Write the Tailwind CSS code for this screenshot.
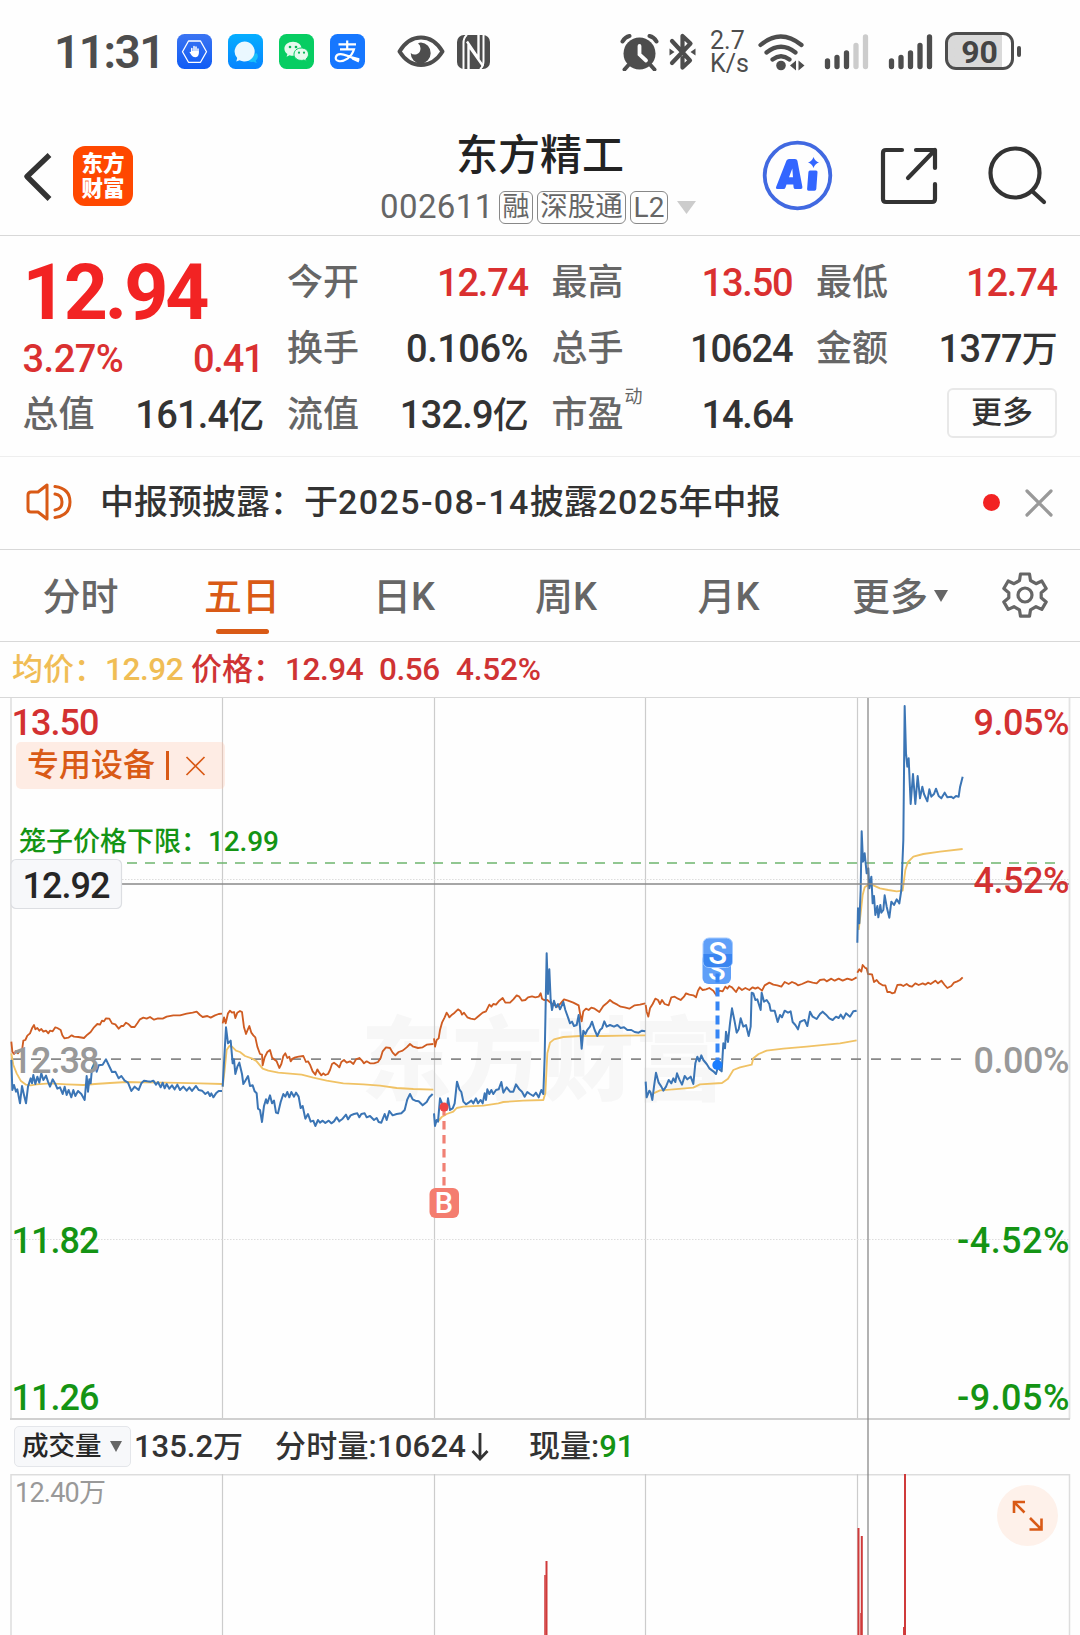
<!DOCTYPE html>
<html lang="zh-CN">
<head>
<meta charset="utf-8">
<meta name="viewport" content="width=device-width, initial-scale=1">
<title>东方精工 002611</title>
<script src="https://cdn.jsdelivr.net/npm/@tailwindcss/browser@4"></script>
</head>
<body class="w-[1080px] h-[1635px] overflow-hidden bg-[#fefefe] text-[#333] font-medium [font-family:Roboto,'Noto_Sans_CJK_SC',sans-serif]">

<!-- Status bar -->
<div class="h-[105px] flex items-start pt-[32px] pl-[54px] text-[#4d4d4d]">
  <div class="w-[123px] h-[38px] leading-[40px] text-[46px] font-semibold tracking-[-1.500px] whitespace-nowrap">11:31</div>
  <div class="flex gap-4 pt-[2px]">
    <svg class="w-[35px] h-[35px]" viewBox="0 0 35 35"><defs><linearGradient id="ga" x2="0" y2="1"><stop stop-color="#3b74f2"/><stop offset="1" stop-color="#0f5cf5"/></linearGradient></defs><rect width="35" height="35" rx="7.5" fill="url(#ga)"/><path d="M11.5 7h12l6 10.7-6 10.6h-12l-6-10.6z" fill="none" stroke="#fff" stroke-width="1.3" stroke-linejoin="round"/><path d="M14.8 19v-4.500M17 18v-5.500M19 18v-5M21 19v-4" stroke="#fff" stroke-width="1.500" stroke-linecap="round"/><path d="M14 17h7.700v3.200q-.6 3-3.500 3-2.400 0-3.700-1.900l-2.100-3.200q1-.9 2 .5z" fill="#fff"/></svg>
    <svg class="w-[35px] h-[35px]" viewBox="0 0 35 35"><defs><linearGradient id="gb" x2="0" y2="1"><stop stop-color="#05aeff"/><stop offset="1" stop-color="#0784ff"/></linearGradient></defs><rect width="35" height="35" rx="7.5" fill="url(#gb)"/><path d="M28.500 19a5 5 0 0 1-.8 7.500l1 2.500-3.500-1.200a5 5 0 0 1-6-3z" fill="#18c0fb"/><path d="M16.500 7.500a10.300 10 0 1 1-5 18.800L8.300 27.500l.9-3.500A10.300 10 0 0 1 16.500 7.500z" fill="#eaf8ff"/></svg>
    <svg class="w-[35px] h-[35px]" viewBox="0 0 35 35"><rect width="35" height="35" rx="7.5" fill="#07cd62"/><path d="M14 7.700c-5 0-8.600 3-8.600 7 0 2.200 1.200 4.100 3 5.400l-.8 2.600 3-1.500c1.200.4 2.200.5 3.400.5 5 0 8.600-3 8.600-7s-3.600-7-8.600-7z" fill="#e6faee"/><path d="M22.300 14c-4.200 0-7.300 2.700-7.300 6.200s3.100 6.200 7.300 6.200c1 0 1.800-.1 2.700-.4l2.500 1.300-.6-2.200c1.600-1.200 2.600-2.900 2.600-4.900 0-3.500-3-6.200-7.200-6.200z" fill="#e6faee" stroke="#07cd62" stroke-width="1"/><g fill="#07b858"><circle cx="11" cy="13" r="1.300"/><circle cx="17" cy="13" r="1.300"/><circle cx="20" cy="18.700" r="1.100"/><circle cx="25" cy="18.700" r="1.100"/></g></svg>
    <svg class="w-[35px] h-[35px]" viewBox="0 0 35 35"><rect width="35" height="35" rx="7.500" fill="#1677ff"/><g fill="none" stroke="#fff" stroke-width="2.200"><path d="M8.500 10.300h17.500M17.200 6.500v8.300M10 15.300h14q-1.500 5.500-6.500 9.300-4.500 3-8.300 2.600-4-.7-3.400-4 .8-3.200 5-3 4.500.2 18.400 6.600"/></g><path d="M21 22l8.500 2.300-1 4.200-6.500-3z" fill="#fff"/></svg>
  </div>
  <svg class="ml-[32px] mt-[2px] w-[48px] h-[35px]" viewBox="0 0 48 35"><path d="M2.500 17.500Q11 3.500 24 3.500t21.500 14Q37 31 24 31T2.500 17.500z" fill="none" stroke="#4d4d4d" stroke-width="4" stroke-linejoin="round"/><path d="M24 8.500a10 10.500 0 1 1-10.300 10.500q2.500 2.300 6 1.200 4-1.600 3.800-6-.2-3.200-2.500-4.600Q22.500 8.500 24 8.500z" fill="#4d4d4d"/></svg>
  <svg class="ml-[12px] mt-[3px] w-[33px] h-[34px]" viewBox="0 0 33 34"><rect width="33" height="34" rx="7" fill="#4d4d4d"/><path d="M6.500 34V8Q6.500 2.500 10 0M26.500 0v26q0 5.500-3.500 8" fill="none" stroke="#fefefe" stroke-width="2"/><path d="M11.500 34V10.500L26 31M7 0l0 0M21.500 0v23.500L10 6.500" fill="none" stroke="#fefefe" stroke-width="2.400"/></svg>

  <div class="ml-[130px] flex items-start">
    <svg class="w-[39px] h-[37px] mt-[2px]" viewBox="0 0 39 37"><circle cx="19.500" cy="19.500" r="16" fill="#4d4d4d"/><path d="M8.500 31l-4 4.500M30.500 31l4 4.500M2.500 7.500Q5 3 9.500 2M36.500 7.500Q34 3 29.500 2" stroke="#4d4d4d" stroke-width="4" stroke-linecap="round" fill="none"/><path d="M19.500 12v8.500l6.500 6" fill="none" stroke="#fefefe" stroke-width="3.800" stroke-linecap="round"/></svg>
    <svg class="ml-[10px] w-[27px] h-[38px] mt-px" viewBox="0 0 27 38"><path d="M3 8l18 19.500-7.500 7V25M3 30L21.500 10.500 13.500 3v11" fill="none" stroke="#4d4d4d" stroke-width="4.200" stroke-linejoin="round" stroke-linecap="round"/><path d="M.5 15.500l5 3.500-5 3.500zM26.500 15.500l-5 3.500 5 3.500z" fill="#4d4d4d"/></svg>
    <div class="ml-[14px] w-[48px] text-[25px] leading-[22.500px] font-normal whitespace-nowrap -mt-[2px]"><div>2.7</div><div>K/s</div></div>
    <svg class="w-[47px] h-[37px] mt-[2px]" viewBox="0 0 47 37"><g fill="none" stroke="#4d4d4d" stroke-width="4.200" stroke-linecap="round"><path d="M2.500 11Q22.500-6 43.500 11M8.500 18.500q14.500-11.500 29 0M14.500 25.500q8.500-6.500 17 0"/></g><circle cx="23" cy="31.500" r="4.800" fill="#4d4d4d"/><path d="M38 26.500v10l-6-5zM40.500 26.500v10l6-5z" fill="#4d4d4d"/></svg>
    <svg class="ml-[19px] w-[45px] h-[37px] mt-[2px]" viewBox="0 0 45 37" stroke-width="5.300" stroke-linecap="round"><path d="M3.500 27v5.500M13 23.500v9M22.500 19v13.500" stroke="#4d4d4d"/><path d="M32 11.500v21M41.500 3v29.500" stroke="#ccc"/></svg>
    <svg class="ml-[19px] w-[45px] h-[37px] mt-[2px]" viewBox="0 0 45 37" stroke-width="5.300" stroke-linecap="round"><path d="M3.500 27v5.500M13 23.500v9M22.500 19v13.500M32 11.500v21M41.500 3v29.500" stroke="#4d4d4d"/></svg>
    <div class="ml-[12px] w-[69px] h-[38px] rounded-[11px] border-[3px] border-[#4d4d4d] bg-linear-to-r from-[#d9d9d9] from-85% to-[#fefefe] to-85% flex items-center justify-center text-[32px] leading-[32px] pt-[2px] font-bold text-[#444]">90</div>
    <div class="ml-[3px] mt-[14px] w-[4px] h-[11px] rounded-full bg-[#4d4d4d]"></div>
  </div>
</div>

<!-- Navigation header -->
<header class="h-[131px] border-b border-[#d8d8d8] flex pt-[28px]">
  <svg class="ml-[22px] mt-[18px] w-[32px] h-[52px]" viewBox="0 0 32 52"><path d="M27.500 4L5 25.500 27.500 48" fill="none" stroke="#333" stroke-width="5.400" stroke-linejoin="round"/></svg>
  <div class="ml-[19px] mt-[13px] w-[60px] h-[60px] rounded-[12px] bg-[#ff4800] flex flex-col items-center justify-center text-white text-[21.500px] leading-[25px] font-black"><span>东方</span><span>财富</span></div>
  <div class="ml-[247px] w-[318px] flex flex-col">
    <h1 class="text-[42px] leading-[46px] h-[57px] pl-[76px] whitespace-nowrap text-[#222]">东方精工</h1>
    <div class="flex gap-[4px] h-[34px] items-center text-[#666] whitespace-nowrap">
      <span class="w-[115px] text-[33px] tracking-[.4px] font-normal leading-[34px]">002611</span>
      <span class="w-[34px] h-[33px] border-[1.500px] border-[#888] rounded-[6px] text-[27px] leading-[30px] font-normal flex justify-center">融</span>
      <span class="w-[89px] h-[33px] border-[1.500px] border-[#888] rounded-[6px] text-[27.500px] leading-[30px] flex justify-center font-normal">深股通</span>
      <span class="w-[38px] h-[33px] border-[1.500px] border-[#888] rounded-[6px] text-[28px] leading-[31px] flex justify-center font-normal">L2</span>
      <svg class="ml-[5px] w-[19px] h-[13px]" viewBox="0 0 19 13"><path d="M0 0h19L9.500 13z" fill="#ccc"/></svg>
    </div>
  </div>
  <svg class="ml-[64px] mt-[7px] w-[71px] h-[71px]" viewBox="0 0 71 71"><circle cx="35.500" cy="35.500" r="32.800" fill="none" stroke="#4169e1" stroke-width="3.800"/><g fill="#3366ff"><path fill-rule="evenodd" d="M24.500 20.500q.8-1.500 2.500-1.500h6q2 0 2.400 1.700l5 26.300q.3 2-1.600 2h-5.400q-1.600 0-1.800-1.500l-.3-3h-6.800l-1 3q-.5 1.500-2 1.500h-6q-2.200 0-1.300-2.200zM27 37.200h4l-.7-8.600z"/><path d="M48 30.500h6q1.700 0 1.500 1.700l-1.200 16.800q-.2 1.800-1.800 1.800h-6q-1.600 0-1.400-1.800l1.300-16.800q.1-1.700 1.600-1.700z"/><path d="M51.500 17q1.500 4.200 5.500 5.500-4 1.300-5.500 5.500-1.500-4.200-5.500-5.500 4-1.300 5.500-5.500z"/></g></svg>
  <svg class="ml-[47px] mt-[14px] w-[58px] h-[58px]" viewBox="0 0 58 58" fill="none" stroke="#333" stroke-width="4.200" stroke-linecap="round" stroke-linejoin="round"><path d="M22 3H6q-3 0-3 3v46q0 3 3 3h46q3 0 3-3V37M36 3h19v18M55 3L28 31"/></svg>
  <svg class="ml-[50px] mt-[13px] w-[60px] h-[60px]" viewBox="0 0 60 60" fill="none" stroke="#333" stroke-width="4.200" stroke-linecap="round"><circle cx="27" cy="27" r="24.500"/><path d="M44 45l12 11"/></svg>
</header>

<!-- Quote summary -->
<section class="h-[221px] border-b border-[#eee] pt-[14px] pl-[22.500px] flex gap-[23.500px] whitespace-nowrap">
  <div class="w-[241px]">
    <div class="h-[87px] leading-[86px] text-[77px] font-bold tracking-[-3px] text-[#f22323]">12.94</div>
    <div class="h-[45px] leading-[45px] text-[38px] tracking-[-.5px] text-[#da3030] flex justify-between"><span>3.27%</span><span class="tracking-[-1.200px]">0.41</span></div>
    <div class="h-[66px] leading-[66px] flex justify-between"><span class="text-[36px] text-[#666]">总值</span><span class="text-[38px] tracking-[-.8px]">161.4<span class="text-[36px]">亿</span></span></div>
  </div>
  <div class="w-[241px] leading-[66px]">
    <div class="h-[66px] flex justify-between"><span class="text-[36px] text-[#666]">今开</span><span class="text-[38px] text-[#da3030] tracking-[-1.200px]">12.74</span></div>
    <div class="h-[66px] flex justify-between"><span class="text-[36px] text-[#666]">换手</span><span class="text-[38px] tracking-[-.5px]">0.106%</span></div>
    <div class="h-[66px] flex justify-between"><span class="text-[36px] text-[#666]">流值</span><span class="text-[38px] tracking-[-.8px]">132.9<span class="text-[36px]">亿</span></span></div>
  </div>
  <div class="w-[241px] leading-[66px]">
    <div class="h-[66px] flex justify-between"><span class="text-[36px] text-[#666]">最高</span><span class="text-[38px] text-[#da3030] tracking-[-1.200px]">13.50</span></div>
    <div class="h-[66px] flex justify-between"><span class="text-[36px] text-[#666]">总手</span><span class="text-[38px] tracking-[-1.100px]">10624</span></div>
    <div class="h-[66px] flex"><span class="text-[36px] text-[#666]">市盈</span><span class="pl-px text-[18px] leading-[30px] text-[#666] font-normal">动</span><span class="ml-auto text-[38px] tracking-[-1.200px]">14.64</span></div>
  </div>
  <div class="w-[241px] leading-[66px]">
    <div class="h-[66px] flex justify-between"><span class="text-[36px] text-[#666]">最低</span><span class="text-[38px] text-[#da3030] tracking-[-1.200px]">12.74</span></div>
    <div class="h-[66px] flex justify-between"><span class="text-[36px] text-[#666]">金额</span><span class="text-[38px] tracking-[-.8px]">1377<span class="text-[36px]">万</span></span></div>
    <div class="h-[66px] flex justify-end pt-[6px]"><button class="w-[110px] h-[50px] border-2 border-[#e8e8e8] rounded-[6px] text-[31px] leading-[44px]">更多</button></div>
  </div>
</section>

<!-- Announcement -->
<section class="h-[93px] border-b border-[#d8d8d8] flex items-center">
  <svg class="ml-[25px] w-[48px] h-[42px]" viewBox="0 0 48 42" fill="none" stroke="#d95a16" stroke-width="3" stroke-linejoin="round" stroke-linecap="round"><path d="M22 3v34l-9-7H6q-3 0-3-3V13q0-3 3-3h7zM30 4.500q15 2 15 15.500T30 35.500M30 12q7 1 7 8t-7 8"/></svg>
  <p class="ml-[27px] text-[34px] whitespace-nowrap h-[93px] leading-[91px]">中报预披露：于<span class="tracking-[1.400px]">2025-08-14</span>披露<span class="tracking-[.9px]">2025</span>年中报</p>
  <div class="ml-auto w-[17px] h-[17px] mb-[2px] rounded-full bg-[#f22323]"></div>
  <svg class="ml-[25px] mr-[27px] mb-px w-[28px] h-[28px]" viewBox="0 0 28 28"><path d="M2 2l24 24M26 2L2 26" stroke="#999" stroke-width="3.200" stroke-linecap="round"/></svg>
</section>

<!-- Period tabs -->
<nav class="h-[92px] border-b border-[#d8d8d8] flex text-[38px] leading-[94px] text-[#666] whitespace-nowrap text-center">
  <div class="w-[161px]">分时</div>
  <div class="w-[162px] text-[#d95a16] flex flex-col items-center"><span class="h-[79px]">五日</span><span class="w-[53px] h-[5px] rounded-full bg-[#d95a16]"></span></div>
  <div class="w-[162px]">日K</div>
  <div class="w-[162px]">周K</div>
  <div class="w-[163px]">月K</div>
  <div class="pl-[42px] flex gap-[6px]"><span>更多</span><svg class="w-[14px] h-[12px] mt-[40px]" viewBox="0 0 14 12"><path d="M0 0h14L7 12z" fill="#666"/></svg></div>
  <svg class="ml-auto mr-[32px] mt-[21px] w-[46px] h-[48px]" viewBox="0 0 46 48" fill="none" stroke="#666" stroke-width="3.200" stroke-linejoin="round"><path d="M18.500 3h9l1 6.500 5.500 3.200 5.800-2.700 4.400 7.500-5 4.200v5l5 4.200-4.400 7.500-5.800-2.700-5.500 3.200-1 6.300h-9l-1-6.300-5.500-3.200-5.800 2.700-4.400-7.500 5-4.200v-5l-5-4.200 4.400-7.500 5.800 2.700 5.500-3.200z"/><circle cx="23" cy="24" r="7"/></svg>
</nav>

<!-- Crosshair readout -->
<div class="h-[56px] border-b border-[#d8d8d8] flex text-[31.500px] leading-[56px] whitespace-nowrap text-[#cf3333]">
  <span class="pl-[12px] w-[105px] text-[31px] text-[#f0bd55]">均价：</span>
  <span class="w-[86px] text-[#f0bd55] tracking-[-.4px]">12.92</span>
  <span class="w-[94px] text-[31px]">价格：</span>
  <span class="w-[94px] tracking-[-.4px]">12.94</span>
  <span class="w-[77px] tracking-[-.4px]">0.56</span>
  <span class="tracking-[-.2px]">4.52%</span>
</div>

<div class="relative">
  <!-- Five-day price chart -->
  <svg class="block w-[1080px] h-[722px]" viewBox="0 698 1080 722" fill="none">
    <text x="361" y="1093" font-size="91" textLength="364" class="font-black" fill="#f7f7f7">东方财富</text>
    <rect x="16" y="742" width="209" height="47" rx="5" fill="#feece4"/>
    <g stroke="#ccc" stroke-width="1.200"><path d="M222.500 698v721M434.500 698v721M645.500 698v721M857.500 698v721"/></g>
    <path d="M11 698v721M1069.500 698v721" stroke="#e3e3e3" stroke-width="1.800"/>
    <path d="M10 1419h1060" stroke="#d0d0d0" stroke-width="2"/>
    <path d="M122 879.500h947M11 1239.500h1058" stroke="#ddd" stroke-width="1" stroke-dasharray="1.500 1.500"/>
    <path d="M127 863h928" stroke="#6db56d" stroke-width="1.700" stroke-dasharray="10 8"/>
    <path d="M11 1059.200h955" stroke="#888" stroke-width="1.800" stroke-dasharray="10 10"/>

    <g stroke-linejoin="round" stroke-width="6">
      <g transform="translate(0 690) scale(.33333)">
        <path stroke="#f0c265" stroke-width="5.500" d="M34 1090 40 1125 50 1150 62 1172 78 1184 92 1186 110 1183 150 1180 200 1183 250 1185 285 1182 330 1179 380 1176 430 1177 500 1178 600 1180 666 1182"/>
        <path stroke="#cf5c22" stroke-width="5.500" d="M34 1055 37 1085 42 1092 48 1083 54 1090 60 1080 66 1082 70 1052 76 1050 82 1037 90 1030 96 1015 102 1005 106 1018 112 1014 118 1022 124 1017 130 1025 138 1022 145 1030 150 1022 158 1024 166 1012 172 1014 182 1020 187 1036 193 1045 205 1043 215 1036 222 1040 235 1041 252 1044 262 1034 272 1026 282 1012 292 1002 300 1004 306 992 312 994 318 985 328 986 336 1000 346 1003 356 1016 364 1008 370 1008 378 998 386 1003 394 1011 404 1011 412 1000 420 988 430 983 440 986 450 981 462 989 474 985 488 986 500 980 520 976 540 976 560 971 578 968 590 965 600 975 608 981 622 978 632 983 645 976 656 972 666 971"/>
        <path stroke="#3b75b5" d="M34 1110 37 1200 42 1185 48 1205 52 1198 60 1240 66 1188 72 1215 78 1240 84 1190 92 1165 96 1180 100 1155 106 1182 112 1160 118 1178 124 1150 130 1170 138 1157 144 1175 150 1190 158 1168 166 1182 172 1196 180 1192 188 1212 194 1190 200 1215 206 1200 214 1222 220 1200 226 1218 234 1203 244 1212 254 1230 260 1158 264 1205 268 1168 272 1180 276 1135 284 1118 290 1145 296 1126 308 1124 318 1108 326 1125 336 1146 346 1145 356 1165 364 1158 374 1172 384 1178 394 1203 404 1190 416 1200 424 1180 432 1172 442 1174 452 1175 460 1172 468 1184 474 1176 482 1192 488 1178 494 1195 500 1182 508 1196 516 1186 524 1198 532 1184 540 1200 550 1190 560 1202 568 1192 576 1203 588 1188 596 1200 606 1202 616 1212 624 1206 630 1218 634 1210 640 1222 648 1210 656 1203 666 1203"/>
      </g>
      <g transform="translate(220 930) scale(.33333)">
        <path stroke="#f0c265" stroke-width="5.500" d="M8 470 14 420 20 360 28 348 36 350 48 362 60 366 75 378 95 385 110 394 128 416 145 422 175 428 210 431 245 434 280 443 320 452 370 460 430 463 480 467 530 474 580 477 640 479"/>
        <path stroke="#cf5c22" stroke-width="5.500" d="M8 280 12 262 17 280 24 250 30 242 36 248 42 246 46 264 52 248 60 243 66 246 72 292 78 312 82 302 88 288 94 308 100 316 106 322 112 350 120 372 126 374 128 406 134 382 142 366 150 360 156 382 162 388 170 394 178 414 184 402 190 378 196 370 202 384 208 380 212 394 218 386 226 382 236 380 250 378 258 396 264 394 270 404 278 424 286 434 292 418 298 428 304 436 310 430 316 435 324 432 330 420 336 402 342 398 350 404 358 412 364 396 372 390 380 398 390 394 400 402 408 388 418 384 426 392 432 400 440 394 450 400 462 400 474 396 482 384 488 364 498 352 510 354 518 368 526 376 536 366 548 362 560 352 570 342 580 350 594 354 608 352 620 344 640 342"/>
        <path stroke="#3b75b5" d="M8 470 18 292 24 340 32 332 38 400 42 388 46 432 52 410 58 398 66 432 70 462 76 452 84 438 90 468 98 466 104 484 110 490 114 536 120 540 126 576 132 528 138 508 142 520 150 496 156 520 162 512 168 548 174 550 182 516 190 492 196 500 202 486 208 502 214 486 222 500 228 488 236 500 242 534 248 528 256 566 264 552 272 575 280 572 286 588 294 570 300 578 308 572 316 579 326 572 334 580 342 574 350 562 358 574 368 566 378 554 384 568 392 556 402 552 412 550 418 562 424 552 434 550 440 562 450 558 462 570 470 564 476 576 484 578 494 552 500 570 508 543 518 556 530 552 544 550 554 540 562 508 570 492 578 508 586 512 596 514 608 526 620 516 628 502 638 492"/>
      </g>
      <g transform="translate(430 930) scale(.33333)">
        <path stroke="#f0c265" stroke-width="5.500" d="M24 575 34 562 50 552 70 545 80 534 100 530 160 527 205 520 220 516 280 512 340 510 346 490 352 370 360 338 372 328 400 321 450 318 520 318 580 317 646 316"/>
        <path stroke="#cf5c22" stroke-width="5.500" d="M12 325 15 350 20 330 26 325 30 300 36 278 44 262 50 248 54 254 58 262 66 254 74 248 84 238 92 244 96 254 102 248 112 262 122 266 134 268 146 258 158 248 168 244 178 224 184 230 190 222 198 224 208 212 218 204 226 218 240 218 250 208 260 196 268 200 276 212 286 210 294 202 306 199 316 202 326 200 332 190 336 206 342 210 352 210 362 218 372 224 382 230 392 220 402 208 414 212 430 218 446 226 450 250 455 274 460 244 468 236 476 240 484 233 494 236 508 246 520 228 530 220 540 210 550 218 562 224 572 230 584 232 598 236 614 226 630 224 646 220"/>
        <path stroke="#3b75b5" d="M12 550 15 588 20 570 24 575 30 505 36 520 42 532 50 540 54 505 60 540 68 535 74 520 81 455 88 478 94 486 100 515 108 523 116 518 124 512 130 520 138 505 144 520 152 510 158 520 164 490 168 510 172 478 178 492 184 480 190 492 198 480 206 478 214 456 220 488 230 472 240 485 250 485 258 463 268 478 276 485 284 500 292 486 300 492 310 498 318 488 326 502 334 480 340 492 344 380 350 70 354 192 358 118 362 210 366 240 372 212 378 232 384 222 390 238 400 216 406 240 414 262 420 280 426 275 432 288 440 285 446 255 450 290 455 356 460 302 466 312 472 300 480 290 486 275 494 300 502 318 510 300 516 295 523 274 530 290 540 285 552 290 562 285 572 294 582 292 592 300 604 300 614 306 626 308 636 302 646 304"/>
      </g>
      <g transform="translate(640 900) scale(.33333)">
        <path stroke="#f0c265" stroke-width="5.500" d="M40 580 60 571 100 568 160 563 180 553 246 549 264 536 280 510 300 502 335 494 340 475 356 462 380 452 430 446 500 440 560 434 600 430 650 421"/>
        <path stroke="#cf5c22" stroke-width="5.500" d="M17 315 20 335 25 350 30 325 38 312 46 296 54 300 60 312 66 300 74 312 86 316 94 292 104 290 114 296 122 300 132 290 138 280 148 284 160 286 168 292 174 272 180 262 188 270 198 268 208 264 220 272 228 284 238 272 248 274 256 260 262 266 268 258 276 262 288 276 296 262 306 270 316 264 328 270 338 262 346 266 354 262 366 272 374 256 388 248 400 254 412 256 424 260 434 246 446 252 456 246 466 250 474 256 486 252 504 244 518 248 530 250 540 240 552 238 560 244 574 236 584 242 596 236 608 242 622 236 636 240 650 232"/>
        <path stroke="#3b75b5" d="M17 545 20 592 28 572 32 578 37 600 42 560 48 518 56 548 64 560 70 572 78 560 86 540 94 550 100 535 106 546 111 520 118 538 126 554 134 528 142 538 152 530 160 552 166 490 172 470 178 484 184 466 190 480 200 492 208 505 220 514 228 522 234 500 240 510 245 514 250 430 255 445 258 395 264 426 270 370 276 325 284 365 290 398 296 388 302 355 310 380 318 375 326 408 332 380 335 278 340 280 346 300 352 298 362 330 365 278 372 305 380 300 388 312 392 332 404 332 413 366 420 345 426 352 434 332 444 338 452 334 458 366 466 375 474 388 480 366 488 362 494 360 502 378 510 335 518 350 530 357 540 342 548 335 558 344 568 355 578 360 588 350 596 354 602 344 610 356 618 340 630 350 640 334 650 332"/>
      </g>
      <g transform="translate(820 690) scale(.33333)">
        <path stroke="#f0c265" stroke-width="5.500" d="M116 720 122 670 128 615 134 592 144 585 160 586 180 595 205 600 230 604 248 602 256 540 264 516 280 500 310 492 360 485 428 477"/>
        <path stroke="#cf5c22" stroke-width="5.500" d="M112 848 118 838 124 845 128 825 136 834 140 835 144 852 156 853 162 876 170 870 178 880 188 886 196 886 202 906 210 906 216 910 224 908 232 885 242 884 250 888 260 882 268 888 276 890 286 880 296 885 308 880 316 884 324 878 332 882 346 872 354 880 364 872 374 885 382 894 394 888 402 878 412 874 420 870 428 862"/>
        <path stroke="#3b75b5" d="M112 758 114 655 118 700 122 600 125 424 129 515 134 490 140 550 145 535 148 595 154 560 158 640 162 618 166 675 172 648 175 682 181 645 184 668 190 660 194 616 200 650 208 683 214 635 222 645 230 628 238 640 244 600 250 450 254 48 258 190 262 230 266 205 272 342 279 252 286 342 293 258 300 325 307 290 312 312 322 334 328 298 334 320 342 312 348 296 356 318 364 325 374 308 382 322 394 320 400 325 408 318 416 320 420 292 428 260"/>
      </g>
    </g>

    <path d="M122 884h947" stroke="#888" stroke-width="1.500"/>

    <!-- Buy and sell markers -->
    <path d="M444 1107v79" stroke="#f08074" stroke-width="3.200" stroke-dasharray="8.500 5.500"/>
    <circle cx="444" cy="1107" r="4.500" fill="#ee4444"/>
    <rect x="429.500" y="1188" width="29.500" height="30" rx="6" fill="#f47d6f"/>
    <text x="444" y="1213" font-size="29" text-anchor="middle" fill="#fff">B</text>
    <rect x="702.500" y="953" width="28.500" height="31" rx="6" fill="#5f9ff8"/>
    <text x="716.800" y="980" font-size="29" text-anchor="middle" fill="#fff">S</text>
    <rect x="703" y="938" width="29.500" height="29.500" rx="6" fill="#5f9ff8" stroke="#a5cbff" stroke-width="1"/>
    <path d="M703.500 954h28.500v7q0 6-6 6h-16.500q-6 0-6-6z" fill="#3a85f0"/>
    <text x="717.700" y="964" font-size="31" text-anchor="middle" fill="#fff">S</text>
    <path d="M717.500 973.500v90" stroke="#3585f5" stroke-width="4" stroke-dasharray="9 5"/>
    <circle cx="717.300" cy="1065" r="5" fill="#1a7dff"/>

    <!-- Sector tag -->
    <text x="27" y="776" font-size="32" fill="#d95a16">专用设备</text>
    <path d="M167.500 751v29" stroke="#d95a16" stroke-width="3"/>
    <path d="M186.500 757l18 18M204.500 757l-18 18" stroke="#d95a16" stroke-width="1.700"/>
    <path d="M222.500 742v47" stroke="#e0c8be" stroke-width="1"/>

    <text x="19" y="851" font-size="27" fill="#149414">笼子价格下限：</text>
    <text x="208" y="851" font-size="28" fill="#149414" textLength="71">12.99</text>
    <rect x="11" y="859.500" width="110.500" height="49" rx="5" fill="#f7f8fa" stroke="#dcdee2" stroke-width="1.200"/>
    <text x="22.500" y="898" font-size="36" fill="#262626" textLength="88">12.92</text>

    <g font-size="36">
      <text x="11.500" y="735" fill="#d33131" textLength="88">13.50</text>
      <text x="11.500" y="1073" fill="#999" textLength="88">12.38</text>
      <text x="11.500" y="1253" fill="#149414" textLength="88">11.82</text>
      <text x="11.500" y="1409.500" fill="#149414" textLength="88">11.26</text>
      <text x="973.500" y="735" fill="#d33131" textLength="96">9.05%</text>
      <text x="973.500" y="893" fill="#d33131" textLength="96">4.52%</text>
      <text x="973.500" y="1073" fill="#999" textLength="96">0.00%</text>
      <text x="957" y="1253" fill="#149414" textLength="112.500">-4.52%</text>
      <text x="957" y="1409.500" fill="#149414" textLength="112.500">-9.05%</text>
    </g>
  </svg>

  <!-- Volume readout -->
  <div class="h-[54px] flex items-center text-[31px] leading-[54px] whitespace-nowrap pl-[14px]">
    <div class="w-[117px] h-[41px] mb-[2px] border-[1.500px] border-[#e4e6ea] rounded-[5px] bg-[#f7f8fa] flex items-center pl-[7px] gap-[8px] text-[26.500px] leading-[38px] text-[#262626]"><span>成交量</span><svg class="w-[12px] h-[11px]" viewBox="0 0 12 11"><path d="M0 0h12L6 11z" fill="#666"/></svg></div>
    <span class="ml-[3px] w-[141px]">135.2<span class="text-[30px]">万</span></span>
    <span class="w-[254px] flex items-center"><span class="tracking-[.2px]">分时量:10624</span><svg class="ml-[5px] w-[18px] h-[28px]" viewBox="0 0 18 28" fill="none" stroke="#333" stroke-width="2.800"><path d="M9 0v26M1.500 18L9 26l7.500-8"/></svg></span>
    <span>现量:<span class="text-[#149414]">91</span></span>
  </div>

  <!-- Volume chart -->
  <svg class="block w-[1080px] h-[161px]" viewBox="0 1474 1080 161" fill="none">
    <path d="M11 1635V1474.700h1058.500V1635" stroke="#ddd" stroke-width="1.500"/>
    <path d="M222.500 1474v161M434.500 1474v161M645.500 1474v161M857.500 1474v161" stroke="#ccc" stroke-width="1.200"/>
    <g stroke="#cf3a3a" stroke-width="2"><path d="M546.500 1561v74M858.500 1528v107M861.800 1536v99M905 1474v161"/><path d="M545 1575v60M861 1613v22M903.800 1627v8" stroke-width="1.500"/></g>
    <text x="15" y="1501.500" font-size="27" fill="#999" class="font-normal" textLength="91">12.40万</text>
    <circle cx="1027.500" cy="1515.500" r="30.500" fill="#fef1ea"/>
    <path d="M1014 1513v-11h11M1014.500 1502.500l10 10M1041.500 1518.500v11h-12M1041 1529l-11-11" stroke="#d95a16" stroke-width="2.600"/>
  </svg>

  <!-- Crosshair -->
  <div class="absolute left-[867px] top-0 w-[2px] h-[937px] bg-[#7f7f7f]/60"></div>
</div>
</body>
</html>
